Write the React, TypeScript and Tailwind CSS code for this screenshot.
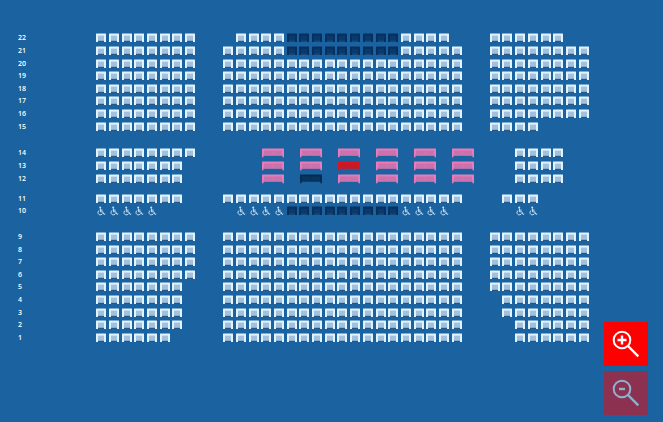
import type { ReactNode } from "react";

type Kind = "free" | "sold" | "wheel" | "sofa" | "sofaSold" | "sofaPicked";
type Run = [kind: Kind, first: number, last: number];
type Row = { label: number; runs: Run[] };

const COLUMNS = 39;
const LEFT: Run = ["free", 0, 7];
const CENTER: Run = ["free", 10, 28];
const RIGHT: Run = ["free", 31, 38];

const upper: Row[] = [
  { label: 22, runs: [LEFT, ["free", 11, 14], ["sold", 15, 23], ["free", 24, 27], ["free", 31, 36]] },
  { label: 21, runs: [LEFT, ["free", 10, 14], ["sold", 15, 23], ["free", 24, 28], RIGHT] },
  { label: 20, runs: [LEFT, CENTER, RIGHT] },
  { label: 19, runs: [LEFT, CENTER, RIGHT] },
  { label: 18, runs: [LEFT, CENTER, RIGHT] },
  { label: 17, runs: [LEFT, CENTER, RIGHT] },
  { label: 16, runs: [LEFT, CENTER, RIGHT] },
  { label: 15, runs: [LEFT, CENTER, ["free", 31, 34]] },
];

const sofas: Row[] = [
  { label: 14, runs: [LEFT, ["sofa", 13, 28], ["free", 33, 36]] },
  {
    label: 13,
    runs: [["free", 0, 6], ["sofa", 13, 16], ["sofaPicked", 19, 19], ["sofa", 22, 28], ["free", 33, 36]],
  },
  {
    label: 12,
    runs: [["free", 0, 6], ["sofa", 13, 13], ["sofaSold", 16, 16], ["sofa", 19, 28], ["free", 33, 36]],
  },
];

const aisle: Row[] = [
  { label: 11, runs: [["free", 0, 6], CENTER, ["free", 32, 34]] },
  {
    label: 10,
    runs: [["wheel", 0, 4], ["wheel", 11, 14], ["sold", 15, 23], ["wheel", 24, 27], ["wheel", 33, 34]],
  },
];

const lower: Row[] = [
  { label: 9, runs: [LEFT, CENTER, RIGHT] },
  { label: 8, runs: [LEFT, CENTER, RIGHT] },
  { label: 7, runs: [LEFT, CENTER, RIGHT] },
  { label: 6, runs: [LEFT, CENTER, RIGHT] },
  { label: 5, runs: [["free", 0, 6], CENTER, RIGHT] },
  { label: 4, runs: [["free", 0, 6], CENTER, ["free", 32, 38]] },
  { label: 3, runs: [["free", 0, 6], CENTER, ["free", 32, 38]] },
  { label: 2, runs: [["free", 0, 6], CENTER, ["free", 33, 38]] },
  { label: 1, runs: [["free", 0, 5], CENTER, ["free", 33, 38]] },
];

const names: Record<Kind, string> = {
  free: "available",
  sold: "sold",
  wheel: "wheelchair space",
  sofa: "sofa, available",
  sofaSold: "sofa, sold",
  sofaPicked: "sofa, selected",
};

function Chair({ frame, cushion, shade }: { frame: string; cushion: string; shade: string }) {
  return (
    <svg className="block h-[10px] w-[10px]" viewBox="0 0 10 10" aria-hidden="true">
      <rect x="2" y="8" width="6" height="1" fill={shade} />
      <path d="M0 .8Q0 .4 .5 .4H9.5Q10 .4 10 .8V9H8V3H2V9H0Z" fill={frame} />
      <rect x="2" y="2.6" width="6" height="5.2" fill={cushion} />
    </svg>
  );
}

function Sofa({ frame, cushion }: { frame: string; cushion: string }) {
  return (
    <svg className="block h-[10px] w-[22px]" viewBox="0 0 22 10" aria-hidden="true">
      <path d="M0 .8Q0 .4 .5 .4H21.5Q22 .4 22 .8V9.2H20.4V7.6H1.6V9.2H0Z" fill={frame} />
      <rect x="2" y="2.4" width="8.8" height="5.2" fill={cushion} />
      <rect x="11.2" y="2.4" width="8.8" height="5.2" fill={cushion} />
    </svg>
  );
}

function Wheelchair() {
  return (
    <svg
      className="block h-[10px] w-[10px]"
      viewBox="0 0 10 10"
      fill="none"
      stroke="#c8e1f5"
      strokeWidth="1"
      aria-hidden="true"
    >
      <circle cx="4.2" cy="1.6" r="1" fill="#c8e1f5" stroke="none" />
      <path d="M4.4 2.4V5.8H6.8L8 8.4L9.2 7.9M4.4 4.1H6.6" />
      <path d="M3.2 4.4A2.4 2.4 0 1 0 6.6 7.4" />
    </svg>
  );
}

const drawings: Record<Kind, ReactNode> = {
  free: <Chair frame="#e0f3ff" cushion="#a3c0dd" shade="#22578a" />,
  sold: <Chair frame="#05305f" cushion="#0a3a6b" shade="#124a80" />,
  wheel: <Wheelchair />,
  sofa: <Sofa frame="#e87cba" cushion="#cb72ad" />,
  sofaSold: <Sofa frame="#032c54" cushion="#08365f" />,
  sofaPicked: <Sofa frame="#dc1420" cushion="#c91828" />,
};

function Seats({ row }: { row: Row }) {
  const cells: ReactNode[] = [];
  let cursor = 0;
  for (const [kind, first, last] of row.runs) {
    const span = kind.startsWith("sofa") ? 2 : 1;
    const step = span === 2 ? 3 : 1;
    for (let column = first; column <= last; column += step) {
      while (cursor < column) {
        cells.push(<span key={cursor} />);
        cursor += 1;
      }
      cells.push(
        <button
          key={column}
          type="button"
          disabled={kind === "sold" || kind === "sofaSold"}
          aria-label={`Row ${row.label}, seat ${column + 1}, ${names[kind]}`}
          className={
            span === 2
              ? "col-span-2 flex items-center justify-center"
              : "flex items-center justify-center"
          }
        >
          {drawings[kind]}
        </button>,
      );
      cursor = column + span;
    }
  }
  while (cursor < COLUMNS) {
    cells.push(<span key={cursor} />);
    cursor += 1;
  }
  return (
    <div className="grid min-w-[495px] max-w-[660px] flex-1 grid-cols-[repeat(39,minmax(0,1fr))] items-center">
      {cells}
    </div>
  );
}

function Section({ rows, className }: { rows: Row[]; className: string }) {
  return (
    <section className={`grid auto-rows-fr ${className}`}>
      {rows.map((row) => (
        <div key={row.label} className="flex min-h-0 items-center">
          <span className="w-[77px] shrink-0 text-[7px] leading-[8px] font-semibold text-white">
            {row.label}
          </span>
          <Seats row={row} />
        </div>
      ))}
    </section>
  );
}

function ZoomButton({ label, plus, disabled }: { label: string; plus?: boolean; disabled?: boolean }) {
  return (
    <button
      type="button"
      aria-label={label}
      disabled={disabled}
      className="size-11 bg-[#ff0000] disabled:opacity-50"
    >
      <svg viewBox="0 0 44 44" className="block size-11" fill="none" stroke="#fff" strokeWidth="2" aria-hidden="true">
        <circle cx="18" cy="18" r="8.3" />
        <path d="M24 24L34.3 34.3" strokeWidth="2.4" />
        <path d={plus ? "M13.5 18H22.5M18 13.5V22.5" : "M15 18H21"} strokeWidth="2.4" />
      </svg>
    </button>
  );
}

export default function App() {
  return (
    <main className="min-h-screen bg-[#1b63a0] pt-8 pr-[73px] pb-16 pl-[18px] font-['Open_Sans',sans-serif]">
      <Section rows={upper} className="h-[101px]" />
      <Section rows={sofas} className="mt-[14px] h-[38px]" />
      <Section rows={aisle} className="mt-[8px] h-[24px]" />
      <Section rows={lower} className="mt-[14px] h-[113px]" />
      <div className="fixed right-[15px] bottom-[7px] flex flex-col gap-[5px]">
        <ZoomButton label="Zoom in" plus />
        <ZoomButton label="Zoom out" disabled />
      </div>
    </main>
  );
}
